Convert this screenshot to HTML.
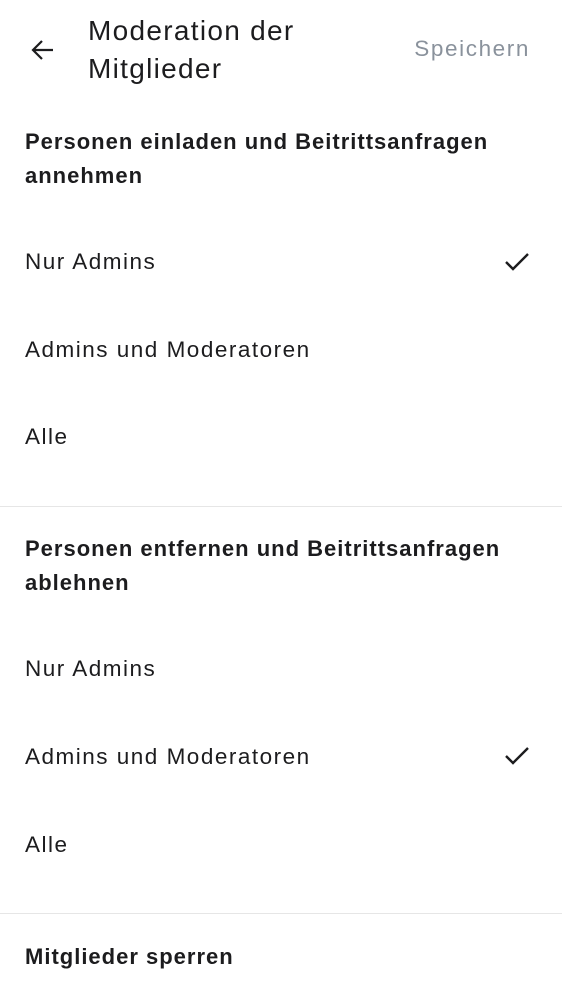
<!DOCTYPE html><html><head><style>
body{margin:0;width:562px;height:1000px;background:#fff;font-family:"Liberation Sans",sans-serif;color:#1c1c1e;position:relative;overflow:hidden}
.a{position:absolute;white-space:nowrap}
.t{font-size:28px;left:88px;line-height:38px;letter-spacing:1.3px}
.h{font-size:22px;font-weight:bold;left:25px;line-height:34px;letter-spacing:1px}
.o{font-size:22.5px;left:25px;line-height:30px;letter-spacing:1.5px}
.d{position:absolute;left:0;right:0;height:1px;background:#e6e6e6}
</style></head><body>
<svg class="a" style="left:30px;top:38px" width="24" height="24" viewBox="0 0 24 24"><path d="M23 12H3M12 3L3 12l9 9" fill="none" stroke="#1c1c1e" stroke-width="2.2"/></svg>
<div class="a t" style="top:12px">Moderation der</div>
<div class="a t" style="top:50px">Mitglieder</div>
<div class="a" style="right:32px;top:36px;font-size:22.5px;color:#8a929c;letter-spacing:1.6px">Speichern</div>
<div class="a h" style="top:125px">Personen einladen und Beitrittsanfragen</div>
<div class="a h" style="top:159px">annehmen</div>
<div class="a o" style="top:247px">Nur Admins</div>
<svg class="a" style="left:504px;top:252px" width="26" height="20"><path d="M2 10l7 7L24 2" fill="none" stroke="#1c1c1e" stroke-width="2.4"/></svg>
<div class="a o" style="top:335px">Admins und Moderatoren</div>
<div class="a o" style="top:422px">Alle</div>
<div class="d" style="top:506px"></div>
<div class="a h" style="top:532px">Personen entfernen und Beitrittsanfragen</div>
<div class="a h" style="top:566px">ablehnen</div>
<div class="a o" style="top:654px">Nur Admins</div>
<div class="a o" style="top:742px">Admins und Moderatoren</div>
<svg class="a" style="left:504px;top:746px" width="26" height="20"><path d="M2 10l7 7L24 2" fill="none" stroke="#1c1c1e" stroke-width="2.4"/></svg>
<div class="a o" style="top:830px">Alle</div>
<div class="d" style="top:913px"></div>
<div class="a h" style="top:940px">Mitglieder sperren</div>
</body></html>
